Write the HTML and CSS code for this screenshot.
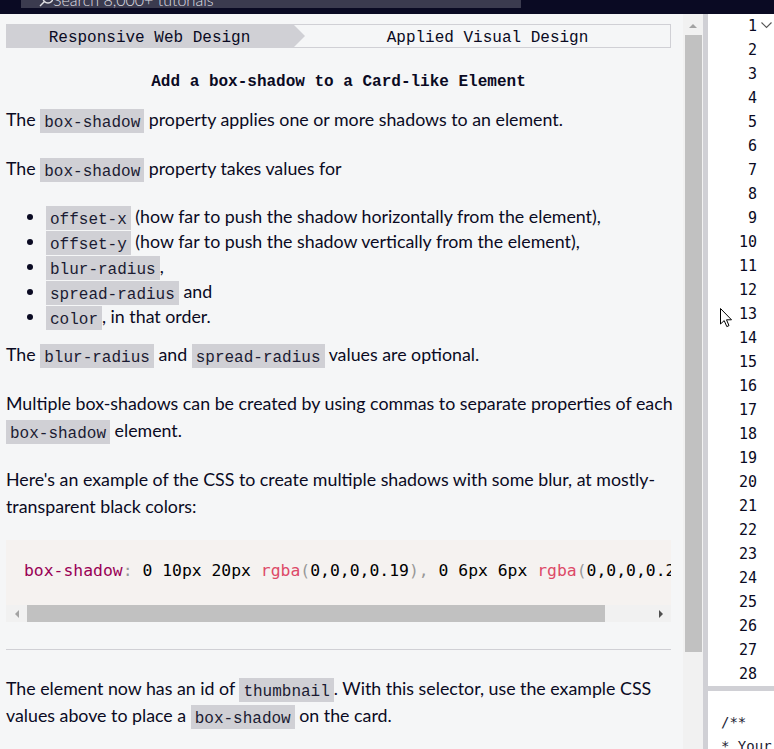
FILE: index.html
```html
<!DOCTYPE html>
<html lang="en">
<head>
<meta charset="utf-8">
<title>Add a box-shadow to a Card-like Element</title>
<link rel="stylesheet" href="styles.css">
</head>
<body>
<header class="nav">
  <div class="search">
    <svg class="search-icon" width="14" height="8" viewBox="0 0 14 8"><circle cx="9" cy="-2" r="5" fill="none" stroke="#dfdfe2" stroke-width="1.5"/><line x1="5.5" y1="1.5" x2="1" y2="6" stroke="#dfdfe2" stroke-width="1.5"/></svg>
    <span class="search-text">Search 8,000+ tutorials</span>
  </div>
</header>
<main class="layout">
  <section class="pane">
    <nav class="crumbs">
      <div class="crumb crumb-super">Responsive Web Design</div>
      <div class="crumb crumb-sub">Applied Visual Design</div>
    </nav>
    <h1 class="title">Add a box-shadow to a Card-like Element</h1>
    <div class="desc">
      <p>The <code>box-shadow</code> property applies one or more shadows to an element.</p>
      <p>The <code>box-shadow</code> property takes values for</p>
      <ul>
        <li><code>offset-x</code> (how far to push the shadow horizontally from the element),</li>
        <li><code>offset-y</code> (how far to push the shadow vertically from the element),</li>
        <li><code>blur-radius</code>,</li>
        <li><code>spread-radius</code> and</li>
        <li><code>color</code>, in that order.</li>
      </ul>
      <p>The <code>blur-radius</code> and <code>spread-radius</code> values are optional.</p>
      <p>Multiple box-shadows can be created by using commas to separate properties of each <code>box-shadow</code> element.</p>
      <p>Here's an example of the CSS to create multiple shadows with some blur, at mostly-transparent black colors:</p>
      <div class="codebox">
        <pre class="code"><span class="tk-prop">box-shadow</span><span class="tk-punc">:</span> 0 10px 20px <span class="tk-fn">rgba</span><span class="tk-punc">(</span>0,0,0,0.19<span class="tk-punc">),</span> 0 6px 6px <span class="tk-fn">rgba</span><span class="tk-punc">(</span>0,0,0,0.23<span class="tk-punc">);</span></pre>
        <div class="hscroll">
          <span class="arrow-left"></span>
          <span class="hthumb"></span>
          <span class="htrack"></span>
          <span class="arrow-right"></span>
        </div>
      </div>
      <hr class="rule">
      <p>The element now has an id of <code>thumbnail</code>. With this selector, use the example CSS values above to place a <code>box-shadow</code> on the card.</p>
    </div>
  </section>
  <div class="vscroll">
    <span class="arrow-up"></span>
    <div class="vthumb"></div>
  </div>
  <div class="split"></div>
  <section class="editor">
    <div class="gutter">
      <div class="ln"><span>1</span><svg class="fold" width="11" height="7" viewBox="0 0 11 7"><polyline points="0.5,0.5 5.5,5.5 10.5,0.5" fill="none" stroke="#555" stroke-width="1.1"/></svg></div>
      <div class="ln"><span>2</span></div>
      <div class="ln"><span>3</span></div>
      <div class="ln"><span>4</span></div>
      <div class="ln"><span>5</span></div>
      <div class="ln"><span>6</span></div>
      <div class="ln"><span>7</span></div>
      <div class="ln"><span>8</span></div>
      <div class="ln"><span>9</span></div>
      <div class="ln"><span>10</span></div>
      <div class="ln"><span>11</span></div>
      <div class="ln"><span>12</span></div>
      <div class="ln"><span>13</span></div>
      <div class="ln"><span>14</span></div>
      <div class="ln"><span>15</span></div>
      <div class="ln"><span>16</span></div>
      <div class="ln"><span>17</span></div>
      <div class="ln"><span>18</span></div>
      <div class="ln"><span>19</span></div>
      <div class="ln"><span>20</span></div>
      <div class="ln"><span>21</span></div>
      <div class="ln"><span>22</span></div>
      <div class="ln"><span>23</span></div>
      <div class="ln"><span>24</span></div>
      <div class="ln"><span>25</span></div>
      <div class="ln"><span>26</span></div>
      <div class="ln"><span>27</span></div>
      <div class="ln"><span>28</span></div>
    </div>
    <div class="hsplit"></div>
    <div class="console">
      <div>/**</div>
      <div>* Your test output will go here</div>
    </div>
  </section>
</main>
<svg class="cursor" width="13" height="20" viewBox="0 0 13 20"><path d="M0.5,0.5 L0.5,16 L4.2,12.6 L6.8,18.6 L9,17.6 L6.5,11.8 L11.5,11.8 Z" fill="#fff" stroke="#000" stroke-width="1" stroke-linejoin="round"/></svg>
</body>
</html>
```

FILE: styles.css
```css
html, body {
  margin: 0;
  padding: 0;
}
body {
  width: 774px;
  height: 749px;
  overflow: hidden;
  background: #f5f6f7;
  font-family: Lato, "Noto Sans", sans-serif;
  color: #0a0a23;
  position: relative;
}
.nav {
  height: 14px;
  background: #0a0a23;
  padding-left: 21px;
}
.search {
  width: 500px;
  height: 8px;
  background: #3b3b4f;
  overflow: hidden;
  display: flex;
  align-items: flex-start;
  line-height: 0;
  font-size: 16px;
  color: #dfdfe2;
}
.search-icon {
  margin-left: 18px;
  flex: none;
}
.search-text {
  white-space: nowrap;
  font-weight: 300;
}
.layout {
  display: flex;
  height: 735px;
}
.pane {
  width: 683px;
  flex: none;
  box-sizing: border-box;
  padding: 10px 12px 0 6px;
  overflow: hidden;
  background: #f5f6f7;
}
.crumbs {
  display: flex;
  height: 24px;
  font-family: "Liberation Mono", "DejaVu Sans Mono", monospace;
  font-size: 16px;
}
.crumb {
  box-sizing: border-box;
  height: 24px;
  text-align: center;
  white-space: nowrap;
}
.crumb-super {
  width: 299px;
  flex: none;
  background: #d0d0d5;
  padding: 3px 12px 0 0;
  line-height: 22px;
  clip-path: polygon(0 0, 287px 0, 100% 50%, 287px 100%, 0 100%);
  position: relative;
  z-index: 1;
}
.crumb-sub {
  flex: 1;
  margin-left: -12px;
  padding: 3px 0 0 12px;
  border: 1px solid #d0d0d5;
  border-left: none;
  line-height: 20px;
}
.title {
  margin: 22px 0 12px;
  font-family: "Liberation Mono", "DejaVu Sans Mono", monospace;
  font-size: 16px;
  font-weight: 700;
  line-height: 24px;
  text-align: center;
}
.desc {
  font-size: 17.8px;
  line-height: 27px;
}
.desc p {
  margin: 0 -6px 22px 0;
}
.desc ul {
  margin: 0 0 12px;
  padding-left: 40px;
}
.desc li {
  line-height: 25px;
}
code {
  font-family: "Liberation Mono", "DejaVu Sans Mono", monospace;
  font-size: 16px;
  line-height: 16px;
  background: #d0d0d5;
  color: #1b1b32;
  padding: 4.5px 4px 2px;
}
.codebox {
  margin: -2px 0 27px;
  background: #f5f2f0;
}
.code {
  margin: 0;
  padding: 19px 18px 22px;
  font-family: "DejaVu Sans Mono", monospace;
  font-size: 16.4px;
  line-height: 24px;
  white-space: pre;
  overflow: hidden;
  color: #000;
}
.tk-prop { color: #990055; }
.tk-punc { color: #999999; }
.tk-fn { color: #dd4a68; }
.hscroll {
  display: flex;
  align-items: stretch;
  height: 17px;
  background: #f1f1f1;
}
.arrow-left {
  width: 21px;
  flex: none;
  display: flex;
  align-items: center;
  justify-content: center;
}
.arrow-left::before {
  content: "";
  border-style: solid;
  border-width: 4px 4px 4px 0;
  border-color: transparent #a3a3a3 transparent transparent;
}
.hthumb {
  width: 578px;
  flex: none;
  background: #c1c1c1;
}
.htrack {
  flex: 1;
}
.arrow-right {
  width: 21px;
  flex: none;
  display: flex;
  align-items: center;
  justify-content: center;
}
.arrow-right::before {
  content: "";
  border-style: solid;
  border-width: 4px 0 4px 4px;
  border-color: transparent transparent transparent #505050;
}
.rule {
  margin: 0 0 25px;
  border: none;
  border-top: 1px solid #d0d0d5;
  height: 0;
}
.vscroll {
  width: 20px;
  flex: none;
  background: #f1f1f1;
  display: flex;
  flex-direction: column;
  align-items: center;
}
.arrow-up {
  margin-top: 10px;
  height: 11px;
  display: block;
}
.arrow-up::before {
  content: "";
  display: block;
  border-style: solid;
  border-width: 0 4px 4px 4px;
  border-color: transparent transparent #a3a3a3 transparent;
}
.vthumb {
  width: 17px;
  height: 617px;
  margin-left: 1px;
  background: #c1c1c1;
}
.split {
  width: 5px;
  flex: none;
  background: #d0d0d5;
}
.editor {
  flex: 1;
  background: #fff;
  display: flex;
  flex-direction: column;
  overflow: hidden;
}
.gutter {
  font-family: "DejaVu Sans Mono", monospace;
  font-size: 15px;
  line-height: 24px;
  color: #0a0a23;
}
.ln {
  display: grid;
  grid-template-columns: 1fr 17px;
  height: 24px;
}
.ln span {
  text-align: right;
}
.fold {
  margin: 8px 0 0 4px;
}
.hsplit {
  height: 5px;
  background: #d0d0d5;
  flex: none;
}
.console {
  padding: 19px 0 0 13px;
  font-family: "DejaVu Sans Mono", monospace;
  font-size: 14px;
  line-height: 24px;
  white-space: nowrap;
  color: #1b1b32;
}
.cursor {
  position: absolute;
  left: 720px;
  top: 308px;
}
```
